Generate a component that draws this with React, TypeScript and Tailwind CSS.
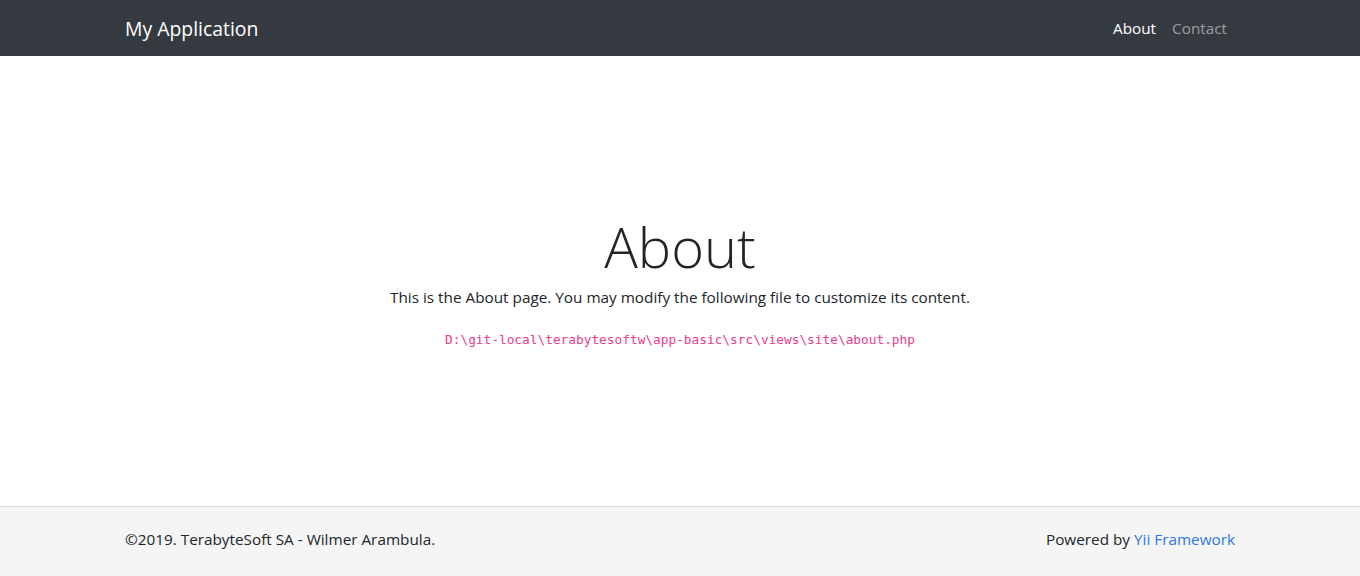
export default function App() {
  const font = { fontFamily: '"Open Sans", "Noto Sans", sans-serif' };
  return (
    <div className="min-h-[576px] flex flex-col bg-white text-[#212529]" style={font}>
      <nav className="h-[56px] bg-[#343a40] flex items-center">
        <div className="w-[1140px] mx-auto px-[15px] flex items-center justify-between">
          <a className="text-[19.4px] text-white leading-[30px] mt-[2px]">My Application</a>
          <div className="flex items-center mr-[8px]">
            <a className="px-[8px] text-[15.3px] text-white">About</a>
            <a className="pl-[8px] text-[15.3px] text-white/50">Contact</a>
          </div>
        </div>
      </nav>
      <main className="flex-1 flex flex-col items-center justify-center h-[450px]">
        <h1 className="text-[56px] font-light leading-[1.2]">About</h1>
        <p className="text-[15.3px] mt-[6px]">This is the About page. You may modify the following file to customize its content.</p>
        <code className="mt-[21px] text-[12.8px] text-[#e83e8c]" style={{ fontFamily: '"DejaVu Sans Mono", monospace' }}>
          D:\git-local\terabytesoftw\app-basic\src\views\site\about.php
        </code>
      </main>
      <footer className="h-[70px] bg-[#f5f5f5] border-t border-[#ddd] flex items-center">
        <div className="w-[1140px] mx-auto px-[15px] flex items-center justify-between text-[15.3px] -mt-[5px]">
          <span>©2019. TerabyteSoft SA - Wilmer Arambula.</span>
          <span>Powered by <a className="text-[#2a7ae2]">Yii Framework</a></span>
        </div>
      </footer>
    </div>
  );
}
